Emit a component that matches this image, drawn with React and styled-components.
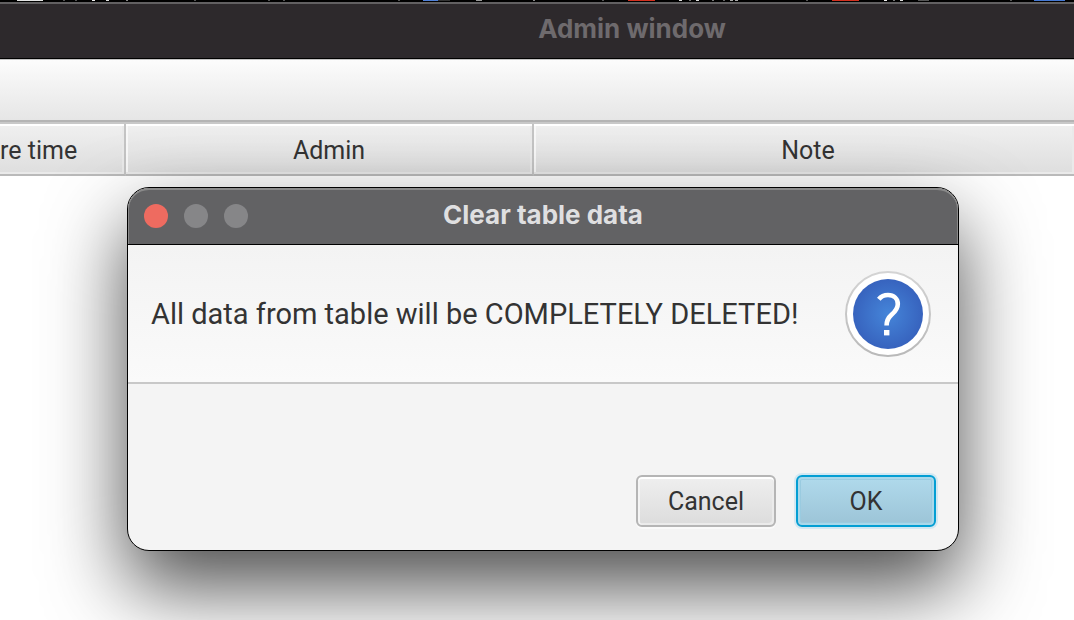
import React from "react";
import styled, { createGlobalStyle } from "styled-components";

const GlobalStyle = createGlobalStyle`
  html, body {
    margin: 0;
    height: 100%;
    background: #fff;
  }
  body {
    overflow: hidden;
    font-family: Roboto, "Liberation Sans", sans-serif;
    color: #333;
  }
  #root {
    height: 100%;
  }
  * {
    box-sizing: border-box;
  }
`;

const Page = styled.div`
  position: relative;
  display: flex;
  flex-direction: column;
  min-height: 100%;
`;

const BackgroundStrip = styled.div`
  height: 2px;
  overflow: hidden;
  background: #000;

  svg {
    display: block;
  }
`;

const TitleText = styled.h1`
  margin: 0;
  padding-bottom: 2px;
  font: 700 26px/32px Inter, "Liberation Sans", sans-serif;
  white-space: nowrap;
`;

const WindowTitleBar = styled.header`
  display: flex;
  align-items: center;
  justify-content: center;
  height: 57px;
  padding: 0 0 2px 190px;
  border-top: 2px solid #626062;
  border-bottom: 1px solid #000;
  background: #2d292c;
  color: #6e6a6d;
`;

const Toolbar = styled.div`
  height: 63px;
  border-top: 1px solid #c4c4c4;
  border-bottom: 2px solid #b4b4b4;
  background: linear-gradient(#fcfcfc, #e6e6e6);
`;

const DataTable = styled.table`
  width: 100%;
  table-layout: fixed;
  border-collapse: separate;
  border-spacing: 0;
  border-top: 2px solid #c8c8c8;
`;

const widths = { narrow: "126px", medium: "408px", fill: "auto" };

const HeadCell = styled.th`
  width: ${({ $size }) => widths[$size]};
  height: 52px;
  padding: 3px 0 0 ${({ $size }) => ($size === "fill" ? "8px" : "0")};
  border-bottom: 2px solid #bababa;
  border-right: ${({ $size }) => ($size === "fill" ? "0" : "2px solid #c4c4c4")};
  background: linear-gradient(#f0f0f0, #dedede);
  box-shadow: inset 0 2px #fff, inset -2px -2px #eaeaea
    ${({ $size }) => ($size === "narrow" ? "" : ", inset 2px 0 #f8f8f8")};
  font-size: 25px;
  font-weight: 400;
  line-height: 30px;
  text-align: ${({ $align }) => $align};
  white-space: nowrap;
`;

const Dialog = styled.section`
  position: absolute;
  top: 187px;
  left: 127px;
  right: 115px;
  overflow: hidden;
  border: 1px solid #000;
  border-radius: 22px;
  background: #f4f4f4;
  box-shadow: 0 36px 80px rgba(0, 0, 0, 0.7);
`;

const DialogTitleBar = styled.header`
  display: grid;
  grid-template-columns: 1fr auto 1fr;
  align-items: center;
  height: 57px;
  padding: 0 16px;
  border-bottom: 1px solid #000;
  border-radius: 21px 21px 0 0;
  background: #626264;
  box-shadow: inset 0 2px #8a8a8a, inset 1px 0 #8a8a8a, inset -1px 0 #8a8a8a;
  color: #dfdfe0;
`;

const WindowControls = styled.div`
  display: flex;
  gap: 16px;
`;

const WindowControl = styled.button`
  width: 24px;
  height: 24px;
  padding: 0;
  border: 0;
  border-radius: 50%;
  background: ${({ $color }) => $color};
`;

const Message = styled.div`
  display: flex;
  align-items: center;
  justify-content: space-between;
  height: 139px;
  padding: 0 27px 0 23px;
  border-bottom: 2px solid #c8c8c8;
  background: linear-gradient(#f3f3f3, #fafafa);
`;

const MessageText = styled.p`
  margin: 0;
  font-size: 29px;
  line-height: 36px;
  white-space: nowrap;
`;

const QuestionIcon = styled.svg`
  flex: none;
  width: 86px;
  height: 86px;
`;

const Actions = styled.footer`
  display: flex;
  justify-content: flex-end;
  gap: 20px;
  padding: 91px 22px 23px;
`;

const variants = {
  plain: `
    border: 2px solid #b5b5b5;
    background: linear-gradient(#efefef, #dcdcdc);
    box-shadow: inset 0 2px #fff, inset 2px 0 #f4f4f4, inset -2px -2px #ebebeb, 0 2px #fafafa;
  `,
  primary: `
    border: 2px solid #039ed3;
    background: linear-gradient(#b0daec, #9cc4d7);
    box-shadow: inset 0 0 0 2px #a9d8ea, inset 0 0 0 3px #9acbe0, 0 0 0 2px #d2e8f2;
  `,
};

const Button = styled.button`
  width: 140px;
  height: 52px;
  padding: 2px 0 0;
  border-radius: 6px;
  color: #333;
  font: 400 25px/30px Roboto, "Liberation Sans", sans-serif;
  ${({ $variant }) => variants[$variant]}
`;

const stripMarks = [
  [17, 26, "#e4e4e4"], [63, 2, "#555"], [75, 2, "#555"], [92, 3, "#eee"], [106, 3, "#ddd"],
  [126, 2, "#888"], [194, 2, "#555"], [268, 2, "#555"], [283, 2, "#555"], [398, 2, "#555"],
  [423, 15, "#4f80d8"], [438, 12, "#333"], [476, 6, "#999"], [533, 2, "#888"], [602, 2, "#555"],
  [628, 27, "#d4301f"], [679, 3, "#ddd"], [689, 2, "#777"], [696, 3, "#ddd"], [712, 2, "#777"],
  [723, 2, "#666"], [730, 3, "#aaa"], [735, 3, "#aaa"], [806, 2, "#555"], [832, 27, "#d4301f"],
  [884, 3, "#eee"], [893, 2, "#777"], [900, 3, "#ddd"], [918, 11, "#555"], [1010, 2, "#555"],
  [1034, 31, "#4478d4"],
];

const columns = [
  { label: "re time", size: "narrow", align: "left" },
  { label: "Admin", size: "medium", align: "center" },
  { label: "Note", size: "fill", align: "center" },
];

export default function App() {
  return (
    <Page>
      <GlobalStyle />
      <BackgroundStrip>
        <svg width="1074" height="1" aria-hidden="true">
          {stripMarks.map(([x, width, fill]) => (
            <rect key={x} x={x} width={width} height="1" fill={fill} />
          ))}
        </svg>
      </BackgroundStrip>
      <WindowTitleBar>
        <TitleText>Admin window</TitleText>
      </WindowTitleBar>
      <Toolbar />
      <DataTable>
        <thead>
          <tr>
            {columns.map(({ label, size, align }) => (
              <HeadCell key={label} scope="col" $size={size} $align={align}>
                {label}
              </HeadCell>
            ))}
          </tr>
        </thead>
      </DataTable>

      <Dialog role="dialog" aria-labelledby="dialog-title">
        <DialogTitleBar>
          <WindowControls>
            <WindowControl type="button" $color="#ee6b60" aria-label="Close" />
            <WindowControl type="button" $color="#868688" aria-label="Minimize" />
            <WindowControl type="button" $color="#868688" aria-label="Zoom" />
          </WindowControls>
          <TitleText as="h2" id="dialog-title">Clear table data</TitleText>
        </DialogTitleBar>
        <Message>
          <MessageText>All data from table will be COMPLETELY DELETED!</MessageText>
          <QuestionIcon viewBox="0 0 86 86" aria-hidden="true">
            <defs>
              <radialGradient id="badge-blue">
                <stop offset="0" stopColor="#4585d9" />
                <stop offset="1" stopColor="#3763be" />
              </radialGradient>
              <linearGradient id="badge-rim" x1="0" y1="0" x2="0" y2="1">
                <stop offset="0" stopColor="#d4d4d4" />
                <stop offset="1" stopColor="#b9b9b9" />
              </linearGradient>
            </defs>
            <circle cx="43" cy="43" r="42" fill="#fff" stroke="url(#badge-rim)" strokeWidth="2" />
            <circle cx="43" cy="43" r="35" fill="url(#badge-blue)" />
            <path
              d="M33.8 28.2C36 25.5 39 24 43 24C49 24 52.8 27.8 52.8 33C52.8 38 50 40.8 46.5 43.8C43 46.8 41.6 49.5 41.6 54.5"
              fill="none"
              stroke="#fff"
              strokeWidth="4.6"
            />
            <rect x="39" y="59" width="5.4" height="5.4" fill="#fff" />
          </QuestionIcon>
        </Message>
        <Actions>
          <Button type="button" $variant="plain">Cancel</Button>
          <Button type="button" $variant="primary">OK</Button>
        </Actions>
      </Dialog>
    </Page>
  );
}
